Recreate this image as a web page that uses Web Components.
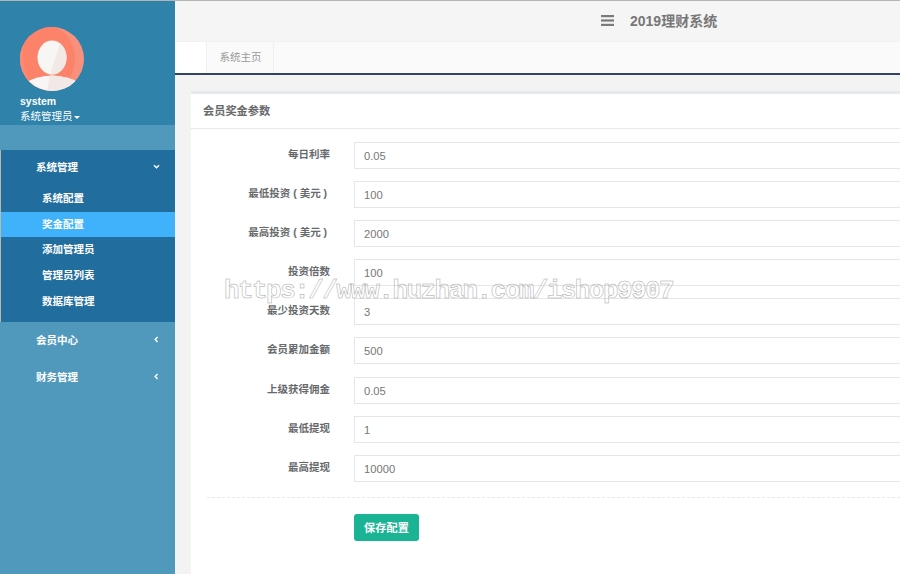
<!DOCTYPE html>
<html lang="zh">
<head>
<meta charset="utf-8">
<title>2019理财系统</title>
<style>
html,body{margin:0;height:100%;overflow:hidden;}
body{font-family:"Liberation Sans","Noto Sans CJK SC",sans-serif;font-size:10.5px;color:#676a6c;}
</style>
</head>
<body>
<app-shell>
  <side-bar slot="side">
    <user-box name="system" role="系统管理员"></user-box>
    <nav-group label="系统管理" open>
      <nav-item>系统配置</nav-item>
      <nav-item active>奖金配置</nav-item>
      <nav-item>添加管理员</nav-item>
      <nav-item>管理员列表</nav-item>
      <nav-item>数据库管理</nav-item>
    </nav-group>
    <nav-group label="会员中心"></nav-group>
    <nav-group label="财务管理"></nav-group>
  </side-bar>
  <top-bar title="2019理财系统"></top-bar>
  <tab-strip><tab-link>系统主页</tab-link></tab-strip>
  <form-card title="会员奖金参数">
    <form-row label="每日利率" value="0.05"></form-row>
    <form-row label="最低投资 ( 美元 )&nbsp;" value="100"></form-row>
    <form-row label="最高投资 ( 美元 )&nbsp;" value="2000"></form-row>
    <form-row label="投资倍数" value="100"></form-row>
    <form-row label="最少投资天数" value="3"></form-row>
    <form-row label="会员累加金额" value="500"></form-row>
    <form-row label="上级获得佣金" value="0.05"></form-row>
    <form-row label="最低提现" value="1"></form-row>
    <form-row label="最高提现" value="10000"></form-row>
    <save-button slot="actions">保存配置</save-button>
  </form-card>
</app-shell>
<water-mark>https://www.huzhan.com/ishop9907</water-mark>

<script>
// base: every element renders markup + styles into an open shadow root
class BaseElement extends HTMLElement{
  constructor(){
    super();
    this.attachShadow({ mode: "open" });
  }
  connectedCallback(){
    this.shadowRoot.innerHTML = `<style>${this.getStyles()}</style>${this.getMarkup()}`;
  }
}

class AppShell extends BaseElement{
  getStyles(){
    return `
      :host{display:flex;height:100vh;background:#f3f3f4;overflow:hidden;border-top:1px solid #b5b5b5;box-sizing:border-box;}
      aside{flex:0 0 175px;}
      main{flex:1;min-width:0;display:flex;flex-direction:column;}
    `;
  }
  getMarkup(){
    return `<aside><slot name="side"></slot></aside><main><slot></slot></main>`;
  }
}

class SideBar extends BaseElement{
  getStyles(){
    return `:host{display:block;height:100%;background:#5199bc;}`;
  }
  getMarkup(){
    return `<slot></slot>`;
  }
}

class UserBox extends BaseElement{
  getStyles(){
    return `
      :host{display:block;height:124px;box-sizing:border-box;padding:26px 0 0 20px;background:#2f83ab;color:#fff;margin-bottom:25px;}
      svg{display:block;width:64px;height:64px;}
      .name{font-weight:bold;font-size:10.5px;line-height:14px;margin-top:3px;}
      .role{font-size:10.5px;line-height:15px;margin-top:1px;display:flex;align-items:center;gap:1px;}
      .caret{width:0;height:0;border:3.5px solid transparent;border-top-color:#fff;border-bottom:0;margin-top:2px;}
    `;
  }
  getMarkup(){
    return `
      <svg viewBox="0 0 64 64" aria-hidden="true">
        <defs><clipPath id="c"><circle cx="32" cy="32" r="32"/></clipPath></defs>
        <g clip-path="url(#c)">
          <rect width="64" height="64" fill="#f9907c"/>
          <ellipse cx="27" cy="32" rx="28" ry="33" fill="#fc8269"/>
          <path d="M0 0H9C3 12 2 24 4 36C5 46 9 56 14 64H0Z" fill="#fa8a74"/>
          <ellipse cx="32" cy="30.5" rx="14.5" ry="17" fill="#f8f5f5"/>
          <path d="M40 16.7C44 19.7 46.5 24.7 46.5 30.5C46.5 39.9 40 47.5 32 47.5C31 47.5 30.5 47.4 30 47.3Z" fill="#f2e9e7"/>
          <path d="M6 55Q32 42 58 55V64H6Z" fill="#f8f5f5"/>
          <path d="M30 48.6Q46 49 58 55V64H26.7Z" fill="#f2e9e7"/>
        </g>
      </svg>
      <div class="name">${this.getAttribute("name")}</div>
      <div class="role">${this.getAttribute("role")}<span class="caret"></span></div>
    `;
  }
}

class NavGroup extends BaseElement{
  getStyles(){
    return `
      :host{display:block;color:#fff;font-size:10.5px;font-weight:bold;}
      :host([open]){background:#216d9e;border-left:1px solid #b9b9a8;padding-bottom:8px;}
      .head{height:36.7px;display:flex;align-items:center;justify-content:space-between;box-sizing:border-box;padding:0 15px 2px 36px;}
      :host([open]) .head{padding:0 15px 4px 35px;height:36px;}
      svg{width:7px;height:7px;fill:none;stroke:#fff;stroke-width:1.4;}
    `;
  }
  getMarkup(){
    const open = this.hasAttribute("open");
    const arrow = open ? "M1 2.2L3.5 4.8L6 2.2" : "M4.6 1L2.2 3.5L4.6 6";
    return `
      <div class="head"><span>${this.getAttribute("label")}</span><svg viewBox="0 0 7 7"><path d="${arrow}"/></svg></div>
      ${open ? `<div><slot></slot></div>` : ""}
    `;
  }
}

class NavItem extends BaseElement{
  getStyles(){
    return `
      :host{display:flex;align-items:center;box-sizing:border-box;height:25.6px;padding:0 0 2px 41px;color:#fff;font-size:10.5px;font-weight:bold;}
      :host([active]){background:#3fb2fb;}
    `;
  }
  getMarkup(){
    return `<slot></slot>`;
  }
}

class TopBar extends BaseElement{
  getStyles(){
    return `
      :host{display:flex;align-items:center;flex:0 0 40px;background:#f5f5f5;padding:0 0 2px 426px;color:#777;box-sizing:border-box;}
      svg{width:13px;height:11px;fill:#7a7a7a;margin-right:16px;}
      b{font-size:14px;font-weight:bold;}
    `;
  }
  getMarkup(){
    return `
      <svg viewBox="0 0 13 11"><rect width="13" height="2.2" y="0"/><rect width="13" height="2.2" y="4.4"/><rect width="13" height="2.2" y="8.8"/></svg>
      <b>${this.getAttribute("title")}</b>
    `;
  }
}

class TabStrip extends BaseElement{
  getStyles(){
    return `
      :host{display:flex;flex:0 0 34px;box-sizing:border-box;padding-left:31px;background:linear-gradient(to right,#fff 31px,#fafafa 31px);border-top:1px solid #f1f1f1;border-bottom:2px solid #2f4560;}
    `;
  }
  getMarkup(){
    return `<slot></slot>`;
  }
}

class TabLink extends BaseElement{
  getStyles(){
    return `
      :host{display:flex;align-items:center;padding:0 11.5px 3px 12.5px;color:#999;font-size:10.5px;border-left:1px solid #f0f0f0;border-right:1px solid #f0f0f0;}
    `;
  }
  getMarkup(){
    return `<slot></slot>`;
  }
}

class FormCard extends BaseElement{
  getStyles(){
    return `
      :host{display:block;margin:16px 0 0 16px;background:#fff;border-top:3px solid #e7eaec;flex:1;}
      h5{margin:0;height:35px;box-sizing:border-box;display:flex;align-items:center;padding:0 0 2px 12px;font-size:11.2px;font-weight:bold;color:#676a6c;border-bottom:1px solid #e7eaec;}
      .body{padding:13px 0 0 0;}
      .line{border-top:1px dashed #e7eaec;margin:3px 0 16px 16px;}
      .actions{padding-left:163px;}
    `;
  }
  getMarkup(){
    return `
      <h5>${this.getAttribute("title")}</h5>
      <div class="body">
        <slot></slot>
        <div class="line"></div>
        <div class="actions"><slot name="actions"></slot></div>
      </div>
    `;
  }
}

class FormRow extends BaseElement{
  getStyles(){
    return `
      :host{display:flex;align-items:flex-start;height:39.1px;}
      label{flex:0 0 139px;text-align:right;font-size:10.5px;font-weight:bold;color:#676a6c;line-height:24px;margin-right:24px;}
      .input{flex:0 0 700px;height:27px;box-sizing:border-box;border:1px solid #e5e6e7;padding:0 9px;font-size:11.2px;line-height:26px;color:#777;background:#fff;}
    `;
  }
  getMarkup(){
    return `<label>${this.getAttribute("label")}</label><div class="input">${this.getAttribute("value")}</div>`;
  }
}

class SaveButton extends BaseElement{
  getStyles(){
    return `
      :host{display:inline-flex;align-items:center;justify-content:center;width:65px;height:27px;background:#1ab394;border-radius:3px;color:#fff;font-size:11.2px;font-weight:bold;}
    `;
  }
  getMarkup(){
    return `<slot></slot>`;
  }
}

// the watermark floats over the page
class WaterMark extends BaseElement{
  getStyles(){
    return `
      :host{position:absolute;left:224px;top:276px;font-family:"Liberation Mono","DejaVu Sans Mono",monospace;font-size:26px;font-weight:bold;letter-spacing:-1.57px;line-height:30px;color:transparent;-webkit-text-stroke:0.5px #a6a6a6;white-space:nowrap;pointer-events:none;opacity:.99;}
    `;
  }
  getMarkup(){
    return `<slot></slot>`;
  }
}

customElements.define("app-shell", AppShell);
customElements.define("side-bar", SideBar);
customElements.define("user-box", UserBox);
customElements.define("nav-group", NavGroup);
customElements.define("nav-item", NavItem);
customElements.define("top-bar", TopBar);
customElements.define("tab-strip", TabStrip);
customElements.define("tab-link", TabLink);
customElements.define("form-card", FormCard);
customElements.define("form-row", FormRow);
customElements.define("save-button", SaveButton);
customElements.define("water-mark", WaterMark);
</script>
</body>
</html>
